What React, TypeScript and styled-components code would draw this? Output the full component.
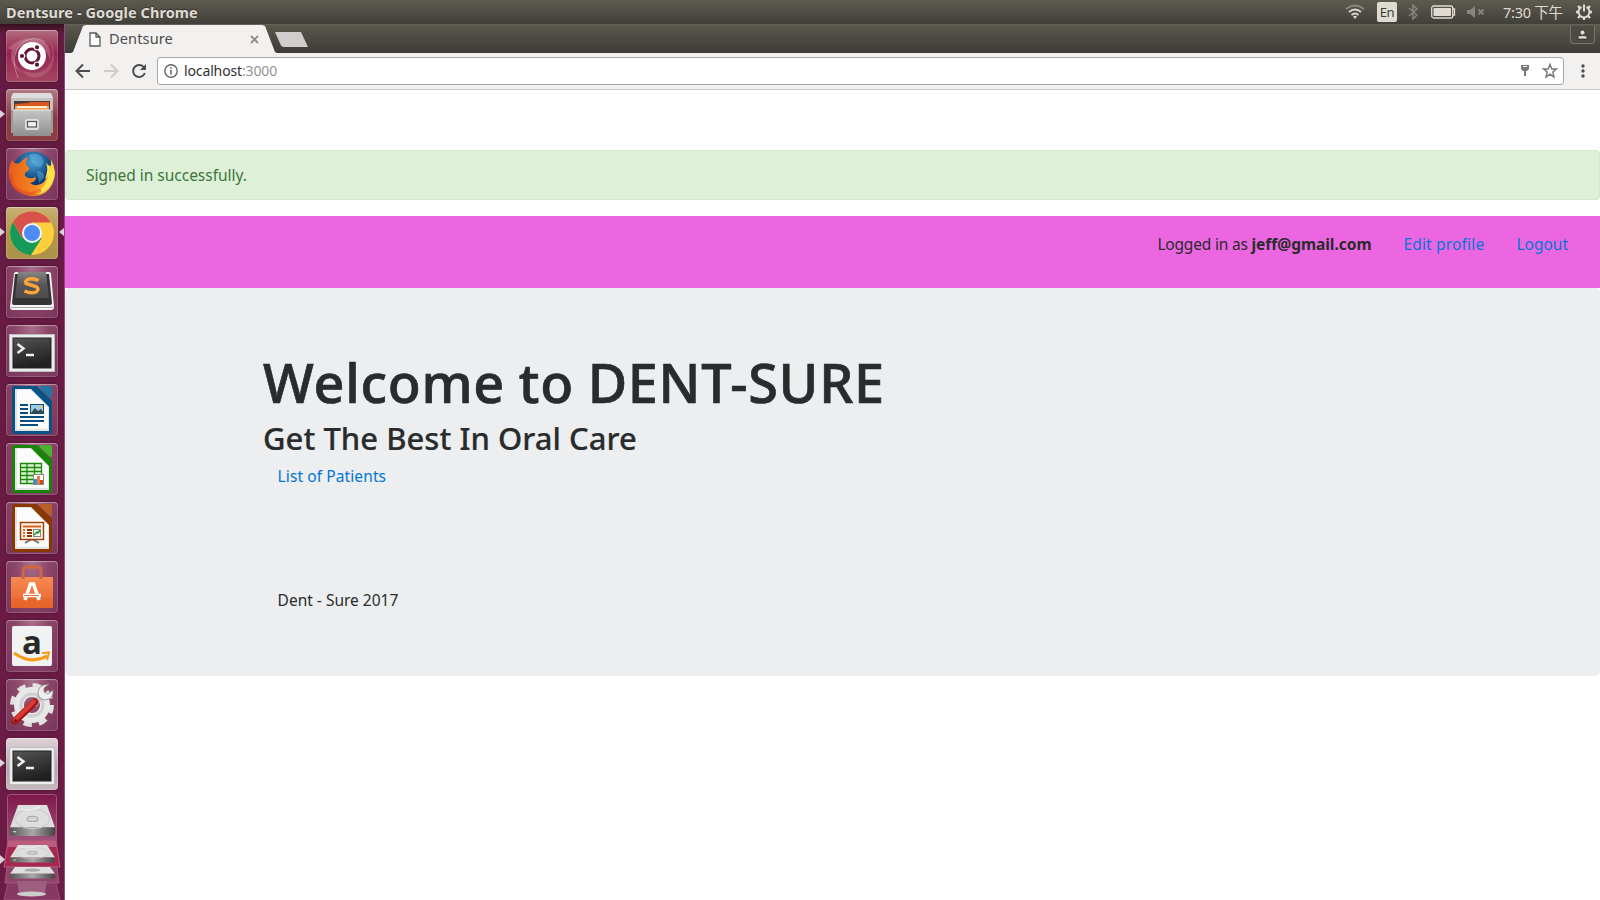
import React from 'react';
import styled, { createGlobalStyle } from 'styled-components';

const GlobalStyle = createGlobalStyle`
  * { box-sizing: border-box; }
  body { margin: 0; background: #fff; overflow: hidden; font-family: 'Noto Sans', 'Noto Sans CJK TC', sans-serif; }
`;

const Desktop = styled.div`
  width: 1600px;
  height: 900px;
  display: grid;
  grid-template: 24px 876px / 65px 1535px;
  overflow: hidden;
`;
const Panel = styled.header`
  grid-column: 1 / 3;
  display: flex;
  align-items: center;
  justify-content: space-between;
  padding: 0 7px 0 6px;
  background: linear-gradient(#5d594e 0, #59564c 15%, #403f3a 100%);
  color: #dfdbd2;
`;
const WindowTitle = styled.span`
  font-size: 14.5px;
  line-height: 23px;
  font-weight: 700;
  letter-spacing: 0.07px;
  text-shadow: 0 -1px 1px #333;
`;
const Indicators = styled.div`
  display: flex;
  align-items: center;
  height: 24px;
`;
const Slot = styled.span<{ $w: number; $gap: number }>`
  display: flex;
  width: ${p => p.$w}px;
  margin-left: ${p => p.$gap}px;
`;
const Lang = styled.span`
  width: 20px;
  height: 20px;
  margin-left: 12px;
  border-radius: 2px;
  background: #dfdbd2;
  color: #3f3e39;
  font-size: 13px;
  line-height: 20px;
  text-align: center;
  letter-spacing: -0.4px;
`;
const Clock = styled.span`
  width: 61px;
  margin-left: 18px;
  font-size: 14.5px;
  line-height: 24px;
  letter-spacing: -0.25px;
  white-space: nowrap;
`;
const Launcher = styled.nav`
  display: flex;
  flex-direction: column;
  gap: 7px;
  padding-top: 6px;
  background: linear-gradient(#35101f 0, #641b41 9px, #6a1b43 50%, #6c1c44 100%);
  border-right: 1px solid #885080;
  overflow: hidden;
`;
const LauncherRow = styled.div`
  position: relative;
  height: 52px;
  flex: none;
  padding-left: 6px;
`;
const Tile = styled.div<{ $bg: string }>`
  width: 52px;
  height: 52px;
  border-radius: 4px;
  background: ${p => p.$bg};
  box-shadow: inset 0 0 0 1px rgba(255, 255, 255, 0.16), inset 0 1px 1px rgba(255, 255, 255, 0.3), 0 0 3px rgba(0, 0, 0, 0.3);
  svg { display: block; overflow: visible; }
`;
const Pip = styled.i<{ $right?: boolean }>`
  position: absolute;
  top: 21px;
  ${p => (p.$right ? 'right: 0;' : 'left: 0;')}
  border: solid transparent;
  border-width: 4.5px 0;
  ${p => (p.$right ? 'border-right: 5px solid #dcd2d8;' : 'border-left: 5px solid #dcd2d8;')}
`;
const Stack = styled.div`
  flex: none;
  margin-top: -7px;
  height: 110px;
  svg { display: block; }
`;
const Browser = styled.main`
  display: flex;
  flex-direction: column;
  min-width: 0;
`;
const TabStrip = styled.div`
  display: flex;
  height: 29px;
  padding: 1px 5px 0 6px;
  background: linear-gradient(#68655a 0, #59564c 2px, #3d3c37 100%);
`;
const Tab = styled.div`
  display: flex;
  align-items: center;
  width: 206px;
  height: 28px;
  padding: 0 18px 0 18px;
  background: #f2f1f0;
  clip-path: polygon(0 100%, 2px 96%, 12px 4%, 15px 0, 191px 0, 194px 4%, 204px 96%, 206px 100%);
`;
const TabLabel = styled.span`
  flex: 1;
  margin-left: 8px;
  font-size: 14.5px;
  line-height: 24px;
  padding-bottom: 2px;
  letter-spacing: 0.15px;
  color: #4c4c4c;
`;
const NewTab = styled.div`
  width: 33px;
  height: 15px;
  margin: 7px 0 0 -2px;
  background: #d0cecd;
  clip-path: polygon(0 0, 26px 0, 33px 100%, 8px 100%, 6px 90%);
`;
const Avatar = styled.div`
  display: flex;
  justify-content: center;
  width: 25px;
  height: 18px;
  margin: 1px 0 0 auto;
  padding-top: 3px;
  border: 1px solid #7a786e;
  border-top: 0;
  border-radius: 0 0 4px 4px;
  background: #4c4a43;
`;
const Toolbar = styled.div`
  display: flex;
  align-items: center;
  height: 37px;
  padding: 0 10px;
  background: #f2f1f0;
  border-bottom: 1px solid #cbc9c7;
`;
const NavButton = styled.span`
  display: flex;
  width: 28px;
`;
const Omnibox = styled.div`
  display: flex;
  align-items: center;
  flex: 1;
  height: 28px;
  margin: 0 17px 0 -2px;
  padding: 0 6px;
  background: #fff;
  border: 1px solid #aaa8a6;
  border-radius: 3px;
`;
const Url = styled.span`
  flex: 1;
  margin-left: 6px;
  font-size: 14px;
  line-height: 24px;
  letter-spacing: -0.13px;
  color: #303030;
`;
const Port = styled.span` color: #949494; `;
const ToolbarEnd = styled.span` width: 5px; `;
const Page = styled.div`
  flex: 1;
  background: #fff;
  color: #292b2c;
  font-size: 15.5px;
  line-height: 24px;
`;
const Alert = styled.div`
  height: 50px;
  margin: 60px 0 16px;
  padding: 12px 20px;
  background: #dff0d8;
  border: 1px solid #d0e9c6;
  border-radius: 4px;
  color: #3c763d;
  letter-spacing: -0.02px;
`;
const UserBar = styled.div`
  display: flex;
  justify-content: flex-end;
  height: 72px;
  padding: 16px 32px 0 0;
  background: #ed66e1;
`;
const Who = styled.span`
  width: 215px;
  margin-right: 31px;
  letter-spacing: -0.2px;
  white-space: nowrap;
  margin-left: -1px;
  b { letter-spacing: -0.02px; }
`;
const Link = styled.a<{ $w?: number; $ls?: number }>`
  color: #0275d8;
  width: ${p => (p.$w ? p.$w + 'px' : 'auto')};
  letter-spacing: ${p => p.$ls ?? 0}px;
`;
const Jumbotron = styled.section`
  height: 388px;
  padding: 63px 198px;
  background: #eceeef;
  border-radius: 5px;
`;
const Heading = styled.h1`
  margin: 0 0 8px;
  font-size: 54px;
  line-height: 62px;
  font-weight: 500;
  letter-spacing: 0.2px;
  word-spacing: -1px;
  -webkit-text-stroke: 0.7px #292b2c;
  letter-spacing: 0.72px;
`;
const Subheading = styled.h2`
  margin: 0 0 8px;
  font-size: 31px;
  line-height: 35px;
  font-weight: 500;
  -webkit-text-stroke: 0.2px #292b2c;
  letter-spacing: 0.03px;
`;
const Line = styled.p<{ $mt: number }>`
  margin: ${p => p.$mt}px 0 0 14.6px;
`;

const Ubuntu = () => (
  <svg width="52" height="52" viewBox="0 0 52 52">
    <path d="M2 18Q18 4 35 10Q47 17 44 30Q39 14 25 12Q12 12 8 28Q8 36 18 44Q1 35 6 20Z" fill="#fff" opacity=".2" />
    <path d="M45 12Q49 28 41 38Q30 47 15 40Q29 55 44 40Q52 27 45 12Z" fill="#fff" opacity=".14" />
    <path d="M12 48Q2 25 17 12Q29 5 39 12" fill="none" stroke="#fff" strokeWidth="1" opacity=".3" />
    <circle cx="26" cy="26" r="14" fill="#fff" />
    <circle cx="26" cy="26" r="7" fill="none" stroke="#611438" strokeWidth="3" />
    <g stroke="#fff" strokeWidth="1.2" fill="#611438">
      <circle cx="16" cy="26" r="2.7" /><circle cx="31" cy="17.3" r="2.7" /><circle cx="31" cy="34.7" r="2.7" />
    </g>
  </svg>
);
const Files = () => (
  <svg width="52" height="52" viewBox="0 0 52 52">
    <path d="M7 4H45L47 9V44H5V9Z" fill="#9a9a9a" /><path d="M7 4H45L47 9H5Z" fill="#ddd" /><path d="M5 9H47V21H5Z" fill="#c3c3c3" />
    <path d="M8 12H44V23H8Z" fill="#4a3c35" /><path d="M9 15L22 14L24 13H43V24H9Z" fill="#d9561f" /><path d="M9 17H43V24H9Z" fill="#f5a04a" /><path d="M11 17H41V19H11Z" fill="#fff0da" />
    <path d="M7 21H45V47H7Z" fill="url(#metal)" /><path d="M7 21H45" stroke="#e7e7e7" />
    <rect x="19" y="30" width="14" height="11" rx="2" fill="#dedede" /><rect x="21.5" y="32.5" width="9" height="5.5" fill="#eee" stroke="#555" strokeWidth="1.2" />
  </svg>
);
const Firefox = () => (
  <svg width="52" height="52" viewBox="0 0 52 52">
    <circle cx="27" cy="24" r="20.500" fill="url(#globe)" />
    <path d="M23 7Q29 4 35 8Q40 14 35 19Q29 19 26 14ZM31 23Q39 23 38 30L33 35Z" fill="#6cb5e3" opacity=".45" />
    <path d="M6 12Q8 17 14 15Q18 10 22 9Q19 14 21 18Q25 20 22 23Q18 24 19 28Q24 32 30 29Q30 34 24 35Q31 40 38 34Q44 27 41 17Q47 20 45 12Q50 21 48 30Q44 48 26 48Q6 46 3 28Q2 21 6 12Z" fill="url(#fox)" />
    <path d="M45 12Q52 25 46 36Q38 47 28 46Q41 39 42 28L39 31Q43 20 40 15Q45 19 46 25Z" fill="#ffe14a" />
    <path d="M5 25Q4 39 16 44Q27 48 35 42" fill="none" stroke="#dc401e" strokeWidth="3" opacity=".5" />
  </svg>
);
const Chrome = () => (
  <svg width="52" height="52" viewBox="0 0 52 52">
    <circle cx="26" cy="26" r="22" fill="#fdcf3d" />
    <path d="M26 26L16.5 31.5L7 15A22 22 0 0 0 25 48L35.5 31.5Z" fill="#169a59" />
    <path d="M26 26L16.5 31.5L7 15A22 22 0 0 1 45 15.5H26Z" fill="#d8524a" />
    <circle cx="26" cy="26" r="10" fill="#f5f5f5" /><circle cx="26" cy="26" r="8" fill="#4d8bf5" />
  </svg>
);
const Sublime = () => (
  <svg width="52" height="52" viewBox="0 0 52 52">
    <path d="M8 8Q8 6 10 6H43Q45 6 45 8L48 41Q48 44 45 44H7Q4 44 4 41Z" fill="#f4f4f4" /><path d="M5 41.500H47" stroke="#aaa" strokeWidth="1" />
    <path d="M9 8H43L46 37Q46 39 44 39H8Q6 39 6 37Z" fill="#343434" /><path d="M12 6H40L43 32H9Z" fill="url(#key)" />
    <path d="M32.500 14.500Q28 12 23 13Q18 15 20 17.500L30 20.500Q34 23 30 26Q25 28 18.500 25" fill="none" stroke="#ffa439" strokeWidth="3.500" />
  </svg>
);
const Terminal = () => (
  <svg width="52" height="52" viewBox="0 0 52 52">
    <rect x="3.5" y="9.5" width="45" height="37" fill="#ececec" stroke="#bdbdbd" />
    <rect x="7" y="13" width="38" height="30" fill="url(#screen)" stroke="#222" />
    <path d="M11.500 19L17.500 23.500L11.500 28M20 30H28" fill="none" stroke="#eee" strokeWidth="2.500" />
  </svg>
);
const Sheet = ({ dark, light, children }: { dark: string; light: string; children: React.ReactNode }) => (
  <svg width="52" height="52" viewBox="0 0 52 52">
    <path d="M8 2H31L46 17V47Q46 50 43 50H9Q6 50 6 47V4Q6 2 8 2Z" fill={dark} />
    <path d="M9 5H25L43 23V47H9Z" fill="#e3e3e3" /><path d="M11 6H25L42 23V45H11Z" fill="#fcfcfc" />
    <path d="M34 2H44Q46 2 46 4V14Q44 15 34 4Z" fill={light} />
    {children}
  </svg>
);
const Writer = () => (
  <Sheet dark="#075386" light="#2374a3">
    <path d="M14 21H22M14 25H22M14 29H22M14 33H38M14 37H38M14 41H32" stroke="#0b4d7c" strokeWidth="2" />
    <rect x="24.500" y="20.500" width="13" height="9" fill="#9ccbea" stroke="#0b4d7c" /><path d="M25 29L29 24L32 27L35 25L38 29Z" fill="#354a4b" /><circle cx="35" cy="23" r="1.200" fill="#f6c333" />
  </Sheet>
);
const Calc = () => (
  <Sheet dark="#18840a" light="#45b32e">
    <path d="M14.500 20.500H35.500V40.500H14.500ZM14 24.500H36M14 28.500H36M14 32.500H36M14 36.500H36M21 20V41M28.500 20V41" fill="#dcf6d3" stroke="#188708" strokeWidth="1.300" />
    <rect x="27.500" y="31.500" width="10" height="10" fill="#fff" stroke="#888" /><path d="M29.500 36V41" stroke="#2c90d7" strokeWidth="3" /><path d="M32.500 33V41" stroke="#eb7b35" strokeWidth="3" /><path d="M35.500 37V41" stroke="#c64a16" strokeWidth="3" />
  </Sheet>
);
const Impress = () => (
  <Sheet dark="#893900" light="#b96029">
    <path d="M19 41L26 37L33 41" stroke="#777" strokeWidth="2" fill="none" />
    <rect x="14.500" y="20.500" width="23" height="17" fill="#fff4e9" stroke="#a04209" strokeWidth="1.500" /><path d="M17 24.500H35" stroke="#d56519" strokeWidth="2" />
    <path d="M17 28H19M17 31H19M17 34H19" stroke="#de6b28" strokeWidth="2" /><path d="M21 28H26M21 31H26M21 34H26" stroke="#883604" strokeWidth="2" />
    <rect x="27.500" y="27.500" width="7" height="7" fill="#f3fff1" stroke="#888" /><path d="M28 33L31 30L32 31L34 28" fill="none" stroke="#218b27" strokeWidth="1.500" />
  </Sheet>
);
const Software = () => (
  <svg width="52" height="52" viewBox="0 0 52 52">
    <path d="M5 16H47V47H5Z" fill="url(#bag)" /><path d="M5 37H47V47H5Z" fill="#e6632c" opacity=".6" />
    <path d="M17 18V11Q17 6 21 6H32Q35 6 35 10V18" fill="none" stroke="#d16644" strokeWidth="3" />
    <path d="M19 39L24.500 23H27.500L33 39M17 34.500H35" fill="none" stroke="#fff" strokeWidth="3.500" /><path d="M18 34.500H33" stroke="#ed7040" strokeWidth="1" />
  </svg>
);
const AmazonFace = styled.div`
  display: flex;
  justify-content: center;
  position: relative;
  width: 52px;
  height: 52px;
  color: #282828;
  font: 700 33px/44px 'Open Sans', sans-serif;
  svg { position: absolute; left: 0; top: 0; z-index: 0; }
  span { position: relative; height: 44px; }
`;
const Amazon = () => (
  <AmazonFace>
    <svg width="52" height="52" viewBox="0 0 52 52">
      <rect x="6" y="6" width="40" height="40" rx="2" fill="#f2f2f2" />
      <path d="M8 33Q25 45 41 36" fill="none" stroke="#f79a16" strokeWidth="3" /><path d="M36 33L43 32.500L41 40" fill="none" stroke="#f79a16" strokeWidth="2" />
    </svg>
    <span>a</span>
  </AmazonFace>
);
const Settings = () => (
  <svg width="52" height="52" viewBox="0 0 52 52">
    <circle cx="26" cy="26" r="19" fill="none" stroke="#e1e1e1" strokeWidth="6" strokeDasharray="8 6.920" />
    <circle cx="26" cy="26" r="13" fill="none" stroke="#e8e8e8" strokeWidth="10" /><circle cx="26" cy="26" r="11" fill="none" stroke="#bcbcbc" strokeWidth="3" opacity=".55" />
    <path d="M28 26L36 16" stroke="#c4c4c4" strokeWidth="6" /><path d="M43 5L38 9V13L42 15L47 11Q48 20 39 21Q33 20 32 15Q31 6 43 5Z" fill="#ededed" stroke="#888" strokeWidth=".8" />
    <path d="M9 42L29 23" stroke="#a51515" strokeWidth="7" strokeLinecap="round" /><path d="M9 41L28 22.500" stroke="#dc3b35" strokeWidth="4" strokeLinecap="round" /><circle cx="9.500" cy="41.500" r="1.300" fill="#5f0909" />
  </svg>
);

const Drive = () => (
  <g>
    <path d="M9 0H38L46 21H1Z" fill="#dedede" /><path d="M1 21H46V26Q46 29 43 29H4Q1 29 1 26Z" fill="url(#driveFront)" />
    <ellipse cx="23.500" cy="13" rx="17" ry="9" fill="none" stroke="#cacaca" strokeWidth="1" /><path d="M12 4Q25 6 31 1" fill="none" stroke="#efefef" strokeWidth="1.500" />
    <ellipse cx="23.500" cy="13" rx="5.500" ry="2.500" fill="#d3d3d3" stroke="#a6a6a6" />
    <path d="M4 25H7" stroke="#e5e5e5" />
  </g>
);
const FoldedItems = () => (
  <svg width="64" height="110" viewBox="0 0 64 110">
    <rect x="7.500" y="4.500" width="49" height="49" rx="3" fill="#9d4771" stroke="#a4527a" />
    <rect x="8" y="5" width="48" height="48" rx="3" fill="url(#tileShade)" />
    <path d="M8 51H56L60 77H4Z" fill="#a92650" stroke="#b9587c" /><path d="M8 51H56L57 57H7Z" fill="#bd5d7d" />
    <path d="M7 77H57L59 93H5Z" fill="#904469" stroke="#a05a7c" />
    <path d="M8 93H56L60 110H4Z" fill="#853962" stroke="#96507a" />
    <g transform="translate(9 15) scale(1 1.070)"><Drive /></g>
    <g transform="translate(9 55) scale(1 .6)"><Drive /></g>
    <g transform="translate(9 77) scale(1 .4)"><path d="M6 0H41L46 17H1Z" fill="#dedede" /><path d="M1 17H46V29H1Z" fill="url(#driveFront)" /><ellipse cx="23.500" cy="8" rx="8" ry="4" fill="#aaa" /></g>
    <path d="M17 91H47L45 103H19Z" fill="#9c5f7d" /><ellipse cx="31.500" cy="104" rx="14.500" ry="2.500" fill="#ccc" />
    <path d="M0 65L5 69.500L0 74Z" fill="#dcd2d8" />
  </svg>
);
const Gradients = () => (
  <defs>
    <linearGradient id="metal" x2="0" y2="1"><stop stopColor="#c5c5c5" /><stop offset="1" stopColor="#8f8f8f" /></linearGradient>
    <radialGradient id="globe" cx=".5" cy=".25"><stop stopColor="#4ba5dc" /><stop offset="1" stopColor="#07386f" /></radialGradient>
    <linearGradient id="fox"><stop stopColor="#e85e1c" /><stop offset=".55" stopColor="#f68421" /><stop offset="1" stopColor="#ffd83d" /></linearGradient>
    <linearGradient id="key" x2="0" y2="1"><stop stopColor="#858585" /><stop offset=".5" stopColor="#555" /><stop offset="1" stopColor="#4c4c4c" /></linearGradient>
    <linearGradient id="screen" x2=".3" y2="1"><stop stopColor="#555" /><stop offset=".5" stopColor="#393939" /><stop offset="1" stopColor="#202020" /></linearGradient>
    <linearGradient id="bag" x2="0" y2="1"><stop stopColor="#f58b52" /><stop offset="1" stopColor="#e96429" /></linearGradient>
    <linearGradient id="driveFront"><stop stopColor="#555" /><stop offset=".5" stopColor="#aaa" /><stop offset="1" stopColor="#444" /></linearGradient>
    <linearGradient id="tileShade" x2="0" y2="1"><stop stopColor="#7d1848" /><stop offset="1" stopColor="#a1557c" /></linearGradient>
  </defs>
);
const Hidden = styled.svg` position: absolute; width: 0; height: 0; `;

const plum = 'radial-gradient(ellipse at 50% 0, #a9718a 0, #8c4669 45%, #78345a 100%)';
const items = [
  { Icon: Ubuntu, bg: 'linear-gradient(#b06d80, #98234d 45%, #a34763)' },
  { Icon: Files, bg: 'linear-gradient(#b27b83, #8c3946 55%, #8a3e40)', left: true },
  { Icon: Firefox, bg: plum },
  { Icon: Chrome, bg: 'linear-gradient(#c7af77, #b5954b 50%, #ac914a)', left: true, right: true },
  { Icon: Sublime, bg: plum },
  { Icon: Terminal, bg: plum },
  { Icon: Writer, bg: plum },
  { Icon: Calc, bg: plum },
  { Icon: Impress, bg: plum },
  { Icon: Software, bg: plum },
  { Icon: Amazon, bg: plum },
  { Icon: Settings, bg: plum },
  { Icon: Terminal, bg: 'linear-gradient(#ded2d8, #b7a4ae 60%, #c3b8be)', left: true },
];

const Star = () => (
  <svg width="14" height="14" viewBox="0 0 14 14" overflow="visible">
    <path d="M7 .5L8.800 5H13.500L9.800 8L11 13L7 10.200L3 13L4.200 8L.5 5H5.200Z" fill="none" stroke="#777" strokeWidth="1.400" />
  </svg>
);

export default function App() {
  return (
    <>
      <GlobalStyle />
      <Hidden><Gradients /></Hidden>
      <Desktop>
        <Panel>
          <WindowTitle>Dentsure - Google Chrome</WindowTitle>
          <Indicators>
            <Slot $w={20} $gap={0}>
              <svg width="20" height="16" viewBox="0 0 20 16" fill="none" strokeWidth="1.800">
                <path d="M1 5Q10-2 19 5" stroke="#8b887f" /><path d="M4 8Q10 3 16 8M6.500 11Q10 8 13.500 11" stroke="#dfdbd2" /><path d="M8 12.500L10 15L12 12.500Q10 11 8 12.500Z" fill="#dfdbd2" />
              </svg>
            </Slot>
            <Lang>En</Lang>
            <Slot $w={10} $gap={11}>
              <svg width="10" height="16" viewBox="0 0 10 16"><path d="M1 4L9 11L5 15V1L9 5L1 12" fill="none" stroke="#88857c" strokeWidth="1.500" /></svg>
            </Slot>
            <Slot $w={25} $gap={13}>
              <svg width="25" height="14" viewBox="0 0 25 14"><rect x=".7" y="1" width="21" height="12" rx="2" fill="none" stroke="#dfdbd2" strokeWidth="1.300" /><rect x="2.500" y="3" width="17.500" height="8" rx="1" fill="#dfdbd2" /><path d="M22 4H23.500V10H22" fill="none" stroke="#dfdbd2" strokeWidth="1.300" /></svg>
            </Slot>
            <Slot $w={18} $gap={11}>
              <svg width="18" height="12" viewBox="0 0 18 12"><path d="M0 4H3L8 0V12L3 8H0Z" fill="#88857c" /><path d="M11.500 3.500L16.500 8.500M16.500 3.500L11.500 8.500" stroke="#88857c" strokeWidth="1.800" /></svg>
            </Slot>
            <Clock>7:30 下午</Clock>
            <Slot $w={18} $gap={11}>
              <svg width="18" height="18" viewBox="0 0 18 18" fill="none" stroke="#dfdbd2">
                <path d="M6.500 4A5.500 5.500 0 1 0 11.500 4M9 1.500V8.500" strokeWidth="2" />
                <path d="M3 3L5 5M15 3L13 5M1 9H4M17 9H14M3 15L5 13M15 15L13 13M9 14V17" strokeWidth="2.300" />
              </svg>
            </Slot>
          </Indicators>
        </Panel>
        <Launcher>
          {items.map(({ Icon, bg, left, right }, i) => (
            <LauncherRow key={i}>
              {left && <Pip />}
              <Tile $bg={bg}><Icon /></Tile>
              {right && <Pip $right />}
            </LauncherRow>
          ))}
          <Stack><FoldedItems /></Stack>
        </Launcher>
        <Browser>
          <TabStrip>
            <Tab>
              <svg width="12" height="15" viewBox="0 0 12 15"><path d="M1 1H7L11 5V14H1ZM7 1V5H11" fill="#fff" stroke="#5a5a5a" strokeWidth="1.300" /></svg>
              <TabLabel>Dentsure</TabLabel>
              <svg width="9" height="9" viewBox="0 0 9 9"><path d="M1 1L8 8M8 1L1 8" stroke="#8d8c8b" strokeWidth="1.800" /></svg>
            </Tab>
            <NewTab />
            <Avatar>
              <svg width="11" height="11" viewBox="0 0 11 11"><circle cx="5.500" cy="3.500" r="2.500" fill="#dedcd6" stroke="#22211f" strokeWidth=".7" /><path d="M1 10V8Q1 6.500 5.500 6.500T10 8V10Z" fill="#dedcd6" stroke="#22211f" strokeWidth=".7" /></svg>
            </Avatar>
          </TabStrip>
          <Toolbar>
            <NavButton><svg width="16" height="16" viewBox="0 0 16 16"><path d="M15 8H2.500M8 1.500L1.500 8L8 14.500" fill="none" stroke="#4c4c4c" strokeWidth="2" /></svg></NavButton>
            <NavButton><svg width="16" height="16" viewBox="0 0 16 16"><path d="M1 8H13.500M8 1.500L14.500 8L8 14.500" fill="none" stroke="#ceccca" strokeWidth="2" /></svg></NavButton>
            <NavButton><svg width="16" height="16" viewBox="0 0 16 16"><path d="M13 4.500A6 6 0 1 0 13.800 10" fill="none" stroke="#4c4c4c" strokeWidth="2" /><path d="M15 1V7H9Z" fill="#4c4c4c" /></svg></NavButton>
            <Omnibox>
              <svg width="14" height="14" viewBox="0 0 14 14"><circle cx="7" cy="7" r="6.200" fill="none" stroke="#666" strokeWidth="1.400" /><path d="M7 6V10.500M7 3.300V4.800" stroke="#666" strokeWidth="1.600" /></svg>
              <Url>localhost<Port>:3000</Port></Url>
              <svg width="23" height="16" viewBox="0 0 23 16"><path d="M1 2H9V6L7 8H6V13H4V8H3L1 6Z" fill="#777" /><path d="M3 3.500H7" stroke="#fff" /></svg>
              <Star />
            </Omnibox>
            <svg width="4" height="14" viewBox="0 0 4 14" fill="#4c4c4c"><circle cx="2" cy="2" r="1.700" /><circle cx="2" cy="7" r="1.700" /><circle cx="2" cy="12" r="1.700" /></svg>
            <ToolbarEnd />
          </Toolbar>
          <Page>
            <Alert>Signed in successfully.</Alert>
            <UserBar>
              <Who>Logged in as <b>jeff@gmail.com</b></Who>
              <Link $w={113} $ls={0.17}>Edit profile</Link>
              <Link>Logout</Link>
            </UserBar>
            <Jumbotron>
              <Heading>Welcome to DENT-SURE</Heading>
              <Subheading>Get The Best In Oral Care</Subheading>
              <Line $mt={0}><Link $ls={0.1}>List of Patients</Link></Line>
              <Line $mt={100}>Dent - Sure 2017</Line>
            </Jumbotron>
          </Page>
        </Browser>
      </Desktop>
    </>
  );
}
